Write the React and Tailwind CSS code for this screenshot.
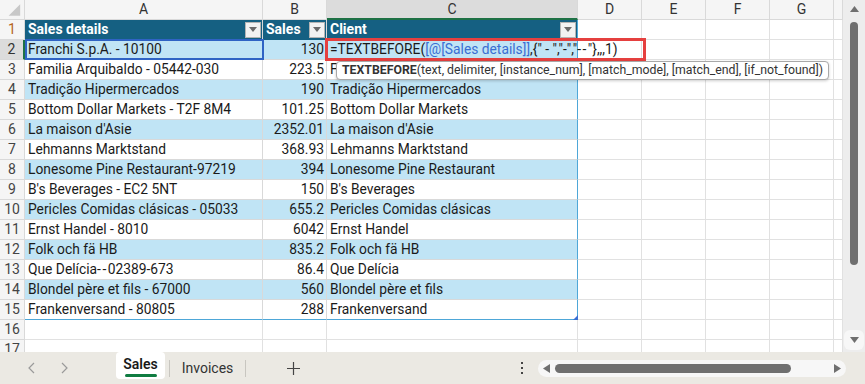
import React from 'react';

const COLS = [25, 238, 64, 251, 64, 64, 64, 64, 9];
const LETTERS = ['', 'A', 'B', 'C', 'D', 'E', 'F', 'G', ''];

const DATA = [
  ['Franchi S.p.A. - 10100', '130', null],
  ['Familia Arquibaldo - 05442-030', '223.5', 'Familia Arquibaldo'],
  ['Tradição Hipermercados', '190', 'Tradição Hipermercados'],
  ['Bottom Dollar Markets - T2F 8M4', '101.25', 'Bottom Dollar Markets'],
  ["La maison d'Asie", '2352.01', "La maison d'Asie"],
  ['Lehmanns Marktstand', '368.93', 'Lehmanns Marktstand'],
  ['Lonesome Pine Restaurant-97219', '394', 'Lonesome Pine Restaurant'],
  ["B's Beverages - EC2 5NT", '150', "B's Beverages"],
  ['Pericles Comidas clásicas - 05033', '655.2', 'Pericles Comidas clásicas'],
  ['Ernst Handel - 8010', '6042', 'Ernst Handel'],
  ['Folk och fä HB', '835.2', 'Folk och fä HB'],
  ['Que Delícia--02389-673', '86.4', 'Que Delícia'],
  ['Blondel père et fils - 67000', '560', 'Blondel père et fils'],
  ['Frankenversand - 80805', '288', 'Frankenversand'],
];

// Roboto's hyphens touch when doubled; give the pair a little air
function Dashes({ text }) {
  const parts = text.split('--');
  return parts.map((p, i) => (
    <React.Fragment key={i}>
      {p}
      {i < parts.length - 1 && <span className="tracking-[1.5px]">--</span>}
    </React.Fragment>
  ));
}

function FilterButton() {
  return (
    <div className="w-[16px] h-[16px] bg-[#f2f2f2] border border-[#b4b4b4] flex items-center justify-center shrink-0">
      <svg width="8" height="5" viewBox="0 0 8 5"><path d="M0 0 L8 0 L4 5 Z" fill="#6a6a6a" /></svg>
    </div>
  );
}

function ColumnHeader() {
  return (
    <div className="flex h-[20px]">
      {COLS.map((w, i) => (
        <div
          key={i}
          style={{ width: w }}
          className={`shrink-0 flex items-center justify-center box-border border-r border-[#d9d9d9] text-[14px] text-[#333] ${
            i === 3 ? 'bg-[#dcdcdc] border-b-2 border-b-[#1e7145]' : 'bg-[#f5f5f5] border-b border-b-[#d9d9d9]'
          }`}
        >
          {i === 0 ? (
            <svg width="25" height="19" viewBox="0 0 25 19"><path d="M21 4 L21 16 L9 16 Z" fill="#c8c8c8" /></svg>
          ) : LETTERS[i]}
        </div>
      ))}
    </div>
  );
}

function RowNum({ n }) {
  const active = n === 2;
  return (
    <div
      className={`w-[25px] shrink-0 box-border border-b border-[#d9d9d9] flex items-center justify-center text-[14px] ${
        active ? 'bg-[#dcdcdc] border-r-2 border-r-[#1e7145] text-[#333]' : 'bg-[#f5f5f5] border-r border-r-[#d9d9d9] text-[#444]'
      } ${n === 1 ? 'text-[#b5651d]' : ''}`}
    >
      {n}
    </div>
  );
}

function EmptyCells({ from }) {
  return COLS.slice(from).map((w, i) => (
    <div key={i} style={{ width: w }} className="shrink-0 box-border border-r border-b border-[#e1e1e1]" />
  ));
}

function HeaderRow() {
  const th = 'shrink-0 box-border bg-[#156082] text-white font-bold text-[14px] flex items-center justify-between pl-[3px] pr-[1px] border-b border-[#156082]';
  return (
    <div className="flex h-[20px]">
      <RowNum n={1} />
      <div className={`${th} w-[238px] border-r border-r-[#d9d9d9]`}><span>Sales details</span><FilterButton /></div>
      <div className={`${th} w-[64px] border-r border-r-[#d9d9d9]`}><span>Sales</span><FilterButton /></div>
      <div className={`${th} w-[251px] border-r border-r-[#4ea7d8]`}><span>Client</span><FilterButton /></div>
      <EmptyCells from={4} />
    </div>
  );
}

function DataRow({ n, row }) {
  const band = n % 2 === 0 ? 'bg-[#c0e4f5]' : 'bg-white';
  const last = n === 15;
  const bb = last ? 'border-b border-b-[#4ea7d8]' : 'border-b border-b-[#d9d9d9]';
  const td = `shrink-0 box-border ${band} ${bb} flex items-center text-[13.8px] text-[#1a1a1a] whitespace-nowrap`;
  return (
    <div className="flex h-[20px]">
      <RowNum n={n} />
      <div className={`${td} w-[238px] border-r border-r-[#d9d9d9] pl-[3px]`}><span><Dashes text={row[0]} /></span></div>
      <div className={`${td} w-[64px] border-r border-r-[#d9d9d9] justify-end pr-[2px]`}>{row[1]}</div>
      <div className={`${td} w-[251px] border-r border-r-[#4ea7d8] pl-[3px] relative`}>
        {row[2] === null ? (
          <span className="relative z-10">
            =TEXTBEFORE(<span className="text-[#3a6fd3]">[@[Sales details]]</span>,{'{" - ","-","'}<span className="tracking-[1.5px]">--</span>{'"}'},,,1)
          </span>
        ) : row[2]}
        {last && (
          <svg className="absolute right-[-1px] bottom-[-1px]" width="5" height="5" viewBox="0 0 5 5"><path d="M5 0 L5 5 L0 5 Z" fill="#3a6fd3" /></svg>
        )}
      </div>
      <EmptyCells from={4} />
    </div>
  );
}

function Grid() {
  return (
    <div className="relative w-[843px] h-[352px] overflow-hidden bg-white">
      <ColumnHeader />
      <HeaderRow />
      {DATA.map((row, i) => <DataRow key={i} n={i + 2} row={row} />)}
      {[16, 17].map((n) => (
        <div key={n} className="flex h-[20px]">
          <RowNum n={n} />
          <EmptyCells from={1} />
        </div>
      ))}
      {/* referenced cell A2 */}
      <div className="absolute left-[25px] top-[39px] w-[239px] h-[21px] border-2 border-[#2f63c4] pointer-events-none" />
      {/* editing cell C2 */}
      <div className="absolute left-[325px] top-[38px] w-[321px] h-[23px] border-[3px] border-[#e5403f] pointer-events-none" />
      {/* function tooltip */}
      <div className="absolute left-[336px] top-[61px] h-[19px] px-[5px] flex items-center bg-white border border-[#a8a8a8] rounded-[4px] shadow-[0_1px_3px_rgba(0,0,0,0.2)] text-[12.3px] text-[#333] whitespace-nowrap">
        <span className="font-bold">TEXTBEFORE</span>(text, delimiter, [instance_num], [match_mode], [match_end], [if_not_found])
      </div>
    </div>
  );
}

function VScroll() {
  return (
    <div className="w-[22px] h-[352px] bg-[#ededed] flex flex-col items-center pt-[6px] pb-[2px]">
      <svg width="9" height="6" viewBox="0 0 9 6"><path d="M0 6 L4.5 0 L9 6 Z" fill="#6f6f6f" /></svg>
      <div className="w-[8px] h-[243px] mt-[10px] rounded-full bg-[#6f6f6f]" />
      <div className="flex-1" />
      <div className="w-[20px] h-[20px] rounded-[6px] bg-[#f7f7f7] flex items-center justify-center">
        <svg width="9" height="6" viewBox="0 0 9 6"><path d="M0 0 L9 0 L4.5 6 Z" fill="#6f6f6f" /></svg>
      </div>
    </div>
  );
}

function BottomBar() {
  return (
    <div className="h-[32px] bg-[#ebe9e3] flex items-center">
      <div className="w-[116px] flex items-center pl-[26px] gap-[20px] text-[#9a9a9a]">
        <svg width="12" height="14" viewBox="0 0 12 14"><path d="M8 2 L3 7 L8 12" stroke="#9a9a9a" strokeWidth="1.2" fill="none" /></svg>
        <svg width="12" height="14" viewBox="0 0 12 14"><path d="M4 2 L9 7 L4 12" stroke="#9a9a9a" strokeWidth="1.2" fill="none" /></svg>
      </div>
      <div className="w-[49px] h-[27px] self-start bg-white rounded-[4px] flex flex-col items-center pt-[3px]">
        <span className="text-[14px] font-semibold text-[#1a1a1a] leading-[18px]">Sales</span>
        <div className="w-[32px] h-[3px] mt-[1px] rounded-full bg-[#107c41]" />
      </div>
      <div className="w-px h-[17px] bg-[#c8c6c0] ml-[4px]" />
      <div className="w-[75px] text-center text-[14px] text-[#333]">Invoices</div>
      <div className="w-px h-[17px] bg-[#c8c6c0]" />
      <div className="w-[94px] flex justify-center">
        <svg width="13" height="13" viewBox="0 0 13 13"><path d="M6.5 0 V13 M0 6.5 H13" stroke="#444" strokeWidth="1.2" /></svg>
      </div>
      <div className="flex-1" />
      <div className="w-[16px] flex flex-col items-center gap-[3px] mr-[8px]">
        <div className="w-[2px] h-[2px] bg-[#444]" />
        <div className="w-[2px] h-[2px] bg-[#444]" />
        <div className="w-[2px] h-[2px] bg-[#444]" />
      </div>
      <div className="w-[308px] h-[17px] mr-[19px] bg-[#f7f7f7] rounded-full flex items-center px-[5px]">
        <svg width="7" height="9" viewBox="0 0 7 9"><path d="M7 0 L0 4.5 L7 9 Z" fill="#6f6f6f" /></svg>
        <div className="w-[236px] h-[9px] ml-[5px] rounded-full bg-[#6f6f6f]" />
        <div className="flex-1" />
        <svg width="7" height="9" viewBox="0 0 7 9"><path d="M0 0 L7 4.5 L0 9 Z" fill="#6f6f6f" /></svg>
      </div>
    </div>
  );
}

export default function App() {
  return (
    <div className="w-[865px] h-[384px] overflow-hidden flex flex-col font-['Roboto',sans-serif]">
      <div className="flex">
        <Grid />
        <VScroll />
      </div>
      <BottomBar />
    </div>
  );
}
